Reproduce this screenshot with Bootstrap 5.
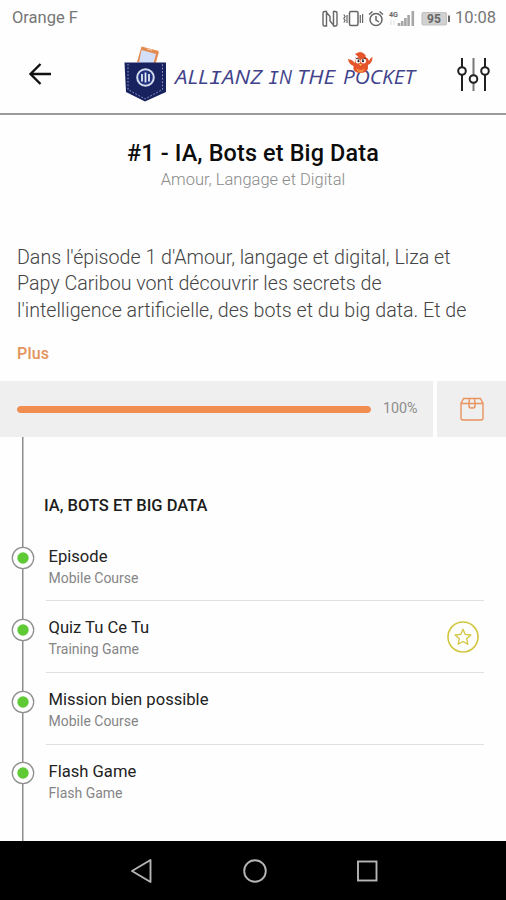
<!DOCTYPE html>
<html lang="fr">
<head>
<meta charset="utf-8">
<meta name="viewport" content="width=device-width, initial-scale=1">
<title>Allianz in the Pocket</title>
<link href="https://cdn.jsdelivr.net/npm/bootstrap@5.3.0/dist/css/bootstrap.min.css" rel="stylesheet">
<style>
  body { font-family: Roboto, "Liberation Sans", sans-serif; color: #222; background: #fefefe; }
  .screen { height: 900px; }
  svg { display: block; flex: none; }
  .status-bar { height: 37px; padding: 0 10px 0 12px; color: #767676; font-size: 16.5px; }
  .app-bar { height: 78px; border-bottom: 2px solid #9b9b9b; padding: 0 16px 3px 28px; }
  .episode-title { font-size: 23.4px; font-weight: 500; line-height: 28px; color: #0c0c0c; margin-top: 24px; letter-spacing: .15px; }
  .episode-theme { font-size: 16.5px; font-weight: 300; line-height: 22px; color: #8a8a8a; margin-top: 2px; }
  .intro { height: 266px; }
  .summary { font-size: 19.65px; font-weight: 300; line-height: 26.4px; color: #444; margin: 54px 0 0 17px; white-space: nowrap; }
  .more-link { font-size: 16px; font-weight: 500; line-height: 20px; color: #e3935c; margin: 20px 0 0 17px; letter-spacing: .2px; }
  .progress-row { height: 56px; gap: 4px; }
  .tile { background: #efefef; padding-left: 17px; }
  .course-progress { height: 7px; width: 354px; background: #ddd; border-radius: 4px; }
  .course-progress .progress-bar { background: #f28d52; border-radius: 4px; }
  .percent { font-size: 14.3px; color: #8d8d8d; margin-left: 12px; }
  .box-tile { width: 69px; padding-left: 0; }
  .timeline { background: linear-gradient(#8c8c8c, #8c8c8c) 22px 0 / 1.5px 100% no-repeat; }
  .section-name { font-size: 16.5px; font-weight: 500; line-height: 20px; color: #1c1c1c; padding: 59px 0 0 44px; height: 92.6px; }
  .step { height: 71.8px; padding-left: 11px; }
  .step-body { margin-left: 11px; width: 438px; padding: 16px 20px 0 2.5px; border-bottom: 1.5px solid #e0e0e0; }
  .step:last-child .step-body { border-color: transparent; }
  .step-marker { margin-top: 16.500px; }
  .step-name { font-size: 16.6px; line-height: 22px; color: #222; }
  .step-kind { font-size: 14px; line-height: 20px; color: #858585; }
  .nav-keys { height: 59px; background: #000; padding-left: 129.5px; gap: 90px; }
</style>
</head>
<body>
<div class="screen d-flex flex-column overflow-hidden">
  <div class="status-bar d-flex align-items-center justify-content-between">
    <span>Orange F</span>
    <div class="d-flex align-items-center">
      <svg width="130" height="20" viewBox="0 0 130 20" fill="none" stroke="#666" stroke-width="1.500">
        <!-- NFC -->
        <path d="M5.500 2.500H3.500Q2 2.500 2 4V15.500Q2 17 3.500 17H5.500zM12.500 2.500h2Q16 2.500 16 4V15.500Q16 17 14.500 17h-2zM5.500 3.500l3.500 4v4M12.500 16L9 12V7.500" stroke-width="1.400"/>
        <!-- vibration -->
        <rect x="28.500" y="2.500" width="8.500" height="14" rx="1.500"/><path d="M22.800 5.500l1.300 2-1.300 2 1.300 2-1.300 2M26 6v8M39.300 6v8M41.600 5v9" stroke-width="1.200"/>
        <!-- alarm -->
        <circle cx="55" cy="10.500" r="6"/><path d="M55 7v4l3 2M48 5.500l3.500-3M62 5.500l-3.500-3"/>
        <text x="68" y="8" font-size="8" font-weight="700" fill="#666" stroke="none" textLength="9" lengthAdjust="spacingAndGlyphs">4G</text>
        <path d="M70 11v5M73 11v5" stroke="#ddd" stroke-width="1"/>
        <path d="M78 17v-3M81.200 17v-5M84.400 17v-8M87.600 17v-11M91.800 17V2" stroke="#a6a6a6" stroke-width="2.600"/>
        <!-- battery -->
        <rect x="101" y="3.500" width="24.500" height="12.500" rx="1.500" stroke="#c2c2c2" stroke-width="1.200" fill="#d1d1d1"/>
        <path d="M128 6.500v6.500" stroke="#666" stroke-width="2"/>
        <text x="106" y="14" font-size="12" font-weight="700" fill="#666" stroke="none" textLength="14">95</text>
      </svg>
      <span class="ms-1">10:08</span>
    </div>
  </div>

  <header class="app-bar d-flex align-items-center">
    <svg width="24" height="24" viewBox="0 0 24 24" fill="none" stroke="#111" stroke-width="2.400"><path d="M23 12H2.500M12.500 2l-10 10 10 10"/></svg>
    <svg width="296" height="64" viewBox="122 42 296 64" style="margin-left:70px" role="img" aria-label="Allianz in the Pocket">
      <path d="M141.500 46.500l16.500 4.300q1 .5.800 1.500L155 66l-18-4z" fill="#e38b50"/>
      <path d="M141.500 50l14.500 4-3 11h-14.500z" fill="#d3def8"/>
      <path d="M147 48.800l5 1.300" stroke="#f6c8a6" stroke-width="1.200"/>
      <path d="M124.500 62.500h41.500v29.500l-21 9.500-19-9.500z" fill="#17225f"/>
      <path d="M128 64v25.500l17 9.500 17.500-9.500V64" fill="none" stroke="#8e96bd" stroke-width="1" stroke-dasharray="1.700 1.700"/>
      <circle cx="145.500" cy="77.500" r="8.300" fill="#1f307f" stroke="#d5dcf0" stroke-width="2"/>
      <path d="M142 74v7.500M145.500 72.500v10M149 74v7.500" stroke="#e4e9f6" stroke-width="1.800"/>
      <g font-family="'Open Sans','Noto Sans',sans-serif" font-style="italic" font-size="20" fill="#41428a">
        <text x="175" y="83.500" textLength="87" lengthAdjust="spacingAndGlyphs">ALL<tspan font-family="'Liberation Mono',monospace">I</tspan>ANZ</text>
        <text x="268" y="83.500" textLength="24" lengthAdjust="spacingAndGlyphs"><tspan font-family="'Liberation Mono',monospace">I</tspan>N</text>
        <text x="297" y="83.500" textLength="38" lengthAdjust="spacingAndGlyphs">THE</text>
        <text x="343" y="83.500" textLength="72" lengthAdjust="spacingAndGlyphs">POCKET</text>
      </g>
      <!-- bird mascot -->
      <path d="M353.500 66q-5-2-5.500-7l3.500 1q2 1 3 3 1-5 4-6l-3.500-3 3-1.500q3-1.500 6.500 1.500 2 2 1 3 3 1 3.500 4 1-3 3.500-4 0 6-4.500 8 1 8-7.500 8t-7-7z" fill="#e5542b"/>
      <path d="M356 68q5 4 8.500 0-1 4.500-4 4.500T356 68z" fill="#f58d3f"/>
      <circle cx="358" cy="61" r="2.500" fill="#fff"/><circle cx="363.500" cy="61" r="2.500" fill="#fff"/>
      <circle cx="358.500" cy="61.200" r="1.100" fill="#222"/><circle cx="363" cy="61.200" r="1.100" fill="#222"/>
      <path d="M355.500 58l4 1.500M366 58l-4 1.500" stroke="#58382f" stroke-width="1"/><path d="M359 64h3l-1.500 2z" fill="#f9c74c"/>
    </svg>
    <svg class="ms-auto" width="34" height="36" viewBox="0 0 34 36" fill="none" stroke="#202020" stroke-width="2"><path d="M6 2v9M6 19v16M29 2v9M29 19v16"/><path d="M17.500 2v17M17.500 27v8" stroke="#777"/><circle cx="6" cy="15" r="3.800"/><circle cx="17.500" cy="23" r="3.800"/><circle cx="29" cy="15" r="3.800"/></svg>
  </header>

  <section class="intro">
    <h1 class="episode-title mb-0 text-center">#1 - IA, Bots et Big Data</h1>
    <div class="episode-theme text-center">Amour, Langage et Digital</div>
    <p class="summary">Dans l'épisode 1 d'Amour, langage et digital, Liza et<br>Papy Caribou vont découvrir les secrets de<br>l'intelligence artificielle, des bots et du big data. Et de</p>
    <div class="more-link">Plus</div>
  </section>

  <div class="progress-row d-flex">
    <div class="tile flex-grow-1 d-flex align-items-center">
      <div class="progress course-progress"><div class="progress-bar" style="width:100%"></div></div>
      <span class="percent">100%</span>
    </div>
    <div class="tile box-tile d-flex align-items-center justify-content-center">
      <svg width="24" height="24" viewBox="0 0 24 24" fill="none" stroke="#e9935f" stroke-width="1.400"><path d="M1 6.500V21q0 2 2 2h18q2 0 2-2V6.500L20.500 1.500h-17zM1 6.500h22M9.500 1.500L9 6.500V9q0 2 2 2h2q2 0 2-2V6.500l-.500-5"/></svg>
    </div>
  </div>

  <main class="timeline flex-grow-1">
    <h2 class="section-name mb-0">IA, BOTS ET BIG DATA</h2>
    <div class="step d-flex">
      <svg class="step-marker" width="24" height="24"><circle cx="12" cy="12" r="10.700" fill="#fff" stroke="#8f8f8f" stroke-width="1.300"/><circle cx="12" cy="12" r="5.700" fill="#5fc936"/></svg>
      <div class="step-body"><div class="step-name">Episode</div><div class="step-kind">Mobile Course</div></div>
    </div>
    <div class="step d-flex">
      <svg class="step-marker" width="24" height="24"><circle cx="12" cy="12" r="10.700" fill="#fff" stroke="#8f8f8f" stroke-width="1.300"/><circle cx="12" cy="12" r="5.700" fill="#5fc936"/></svg>
      <div class="step-body d-flex justify-content-between pe-1"><div><div class="step-name">Quiz Tu Ce Tu</div><div class="step-kind">Training Game</div></div>
        <svg class="mt-1" width="34" height="34" viewBox="0 0 34 34" fill="none" stroke="#d1c63e"><circle cx="17" cy="16" r="15" stroke-width="1.600"/><path d="M17 8.300l2.300 5.100 5.600.6-4.200 3.800 1.200 5.500-4.900-2.800-4.900 2.800 1.200-5.500-4.200-3.800 5.600-.6z" stroke-width="1.300" stroke-linejoin="round"/></svg>
      </div>
    </div>
    <div class="step d-flex">
      <svg class="step-marker" width="24" height="24"><circle cx="12" cy="12" r="10.700" fill="#fff" stroke="#8f8f8f" stroke-width="1.300"/><circle cx="12" cy="12" r="5.700" fill="#5fc936"/></svg>
      <div class="step-body"><div class="step-name">Mission bien possible</div><div class="step-kind">Mobile Course</div></div>
    </div>
    <div class="step d-flex">
      <svg class="step-marker" width="24" height="24"><circle cx="12" cy="12" r="10.700" fill="#fff" stroke="#8f8f8f" stroke-width="1.300"/><circle cx="12" cy="12" r="5.700" fill="#5fc936"/></svg>
      <div class="step-body"><div class="step-name">Flash Game</div><div class="step-kind">Flash Game</div></div>
    </div>
  </main>

  <nav class="nav-keys d-flex align-items-center">
    <svg width="23" height="26" viewBox="0 0 23 26" fill="none" stroke="#b5b5b5" stroke-width="1.900" stroke-linejoin="round"><path d="M20.500 2v22L2 13z"/></svg>
    <svg width="24" height="24" viewBox="0 0 24 24" fill="none" stroke="#b5b5b5" stroke-width="1.900"><circle cx="12" cy="12" r="10.800"/></svg>
    <svg width="22" height="22" viewBox="0 0 22 22" fill="none" stroke="#b5b5b5" stroke-width="1.900"><rect x="1" y="1.500" width="18.500" height="19"/></svg>
  </nav>
</div>
<script src="https://cdn.jsdelivr.net/npm/bootstrap@5.3.0/dist/js/bootstrap.bundle.min.js"></script>
</body>
</html>
